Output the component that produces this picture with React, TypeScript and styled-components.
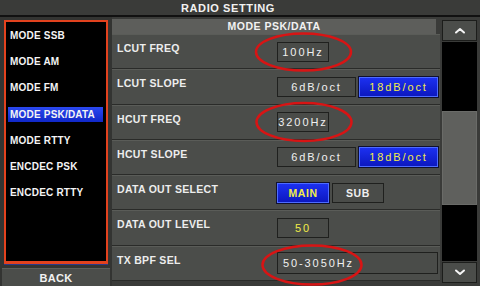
import React from "react";
import styled, { createGlobalStyle } from "styled-components";

const GlobalStyle = createGlobalStyle`
  html, body {
    margin: 0;
    padding: 0;
    background: #000;
  }
  body {
    font-family: "Liberation Sans", Arial, sans-serif;
  }
`;

const Screen = styled.div`
  position: relative;
  width: 480px;
  height: 286px;
  overflow: hidden;
  background: #2f302e;
  display: flex;
  flex-direction: column;
`;

const TitleBar = styled.div`
  height: 15px;
  flex: none;
  padding-right: 24px;
  background: #3a3b39;
  border-bottom: 2px solid #111;
  color: #f2f2f2;
  font-size: 11px;
  font-weight: bold;
  letter-spacing: 0.6px;
  line-height: 16px;
  text-align: center;
`;

const Body = styled.div`
  flex: 1;
  display: flex;
  flex-direction: row;
  min-height: 0;
`;

const LeftCol = styled.div`
  width: 112px;
  flex: none;
  display: flex;
  flex-direction: column;
  background: #333432;
`;

const ModeList = styled.div`
  margin: 3px 4px 0 4px;
  height: 239px;
  background: #000;
  border: 2px solid #e2421e;
  border-bottom-width: 3px;
  box-shadow: 0 1px 0 #2a3a8a;
  display: flex;
  flex-direction: column;
`;

const ModeItem = styled.div<{ $active?: boolean }>`
  height: 26.3px;
  display: flex;
  align-items: center;
  padding: 0 3px 0 2px;
  & > span {
    flex: 1;
    height: 15px;
    line-height: 15px;
    padding-left: 2px;
    color: #f4f4f4;
    font-size: 10px;
    font-weight: bold;
    letter-spacing: 0.2px;
    white-space: nowrap;
    background: ${(p) =>
      p.$active ? "linear-gradient(#2a48f0, #1028c8)" : "transparent"};
  }
`;

const BackButton = styled.div`
  margin: 4px 2px 0 2px;
  flex: 1;
  background: #4b4d4a;
  border-top: 1px solid #5d5f5b;
  color: #f2f2f2;
  font-size: 11px;
  font-weight: bold;
  display: flex;
  align-items: center;
  justify-content: center;
  letter-spacing: 0.3px;
`;

const MiddleCol = styled.div`
  width: 328px;
  flex: none;
  display: flex;
  flex-direction: column;
  padding-top: 2px;
  background: #3a3b39;
`;

const Header = styled.div`
  height: 15px;
  margin-right: 4px;
  background: #5d5e5b;
  color: #f2f2f2;
  font-size: 10.5px;
  font-weight: bold;
  letter-spacing: 0.5px;
  line-height: 15px;
  text-align: center;
`;

const Rows = styled.div`
  height: 247px;
  display: flex;
  flex-direction: column;
`;

const Row = styled.div`
  flex: 1;
  display: grid;
  grid-template-columns: 165px 1fr;
  background: #4b4d4a;
  border-top: 1px solid #5a5c58;
  border-bottom: 1px solid #2a2b29;
  box-sizing: border-box;
`;

const Label = styled.div`
  align-self: start;
  padding: 7px 0 0 5px;
  color: #ededed;
  font-size: 10.5px;
  font-weight: bold;
  letter-spacing: 0.3px;
  white-space: nowrap;
`;

const Controls = styled.div`
  align-self: center;
  display: flex;
  gap: 3px;
`;

const ValueButton = styled.div<{
  $w: number;
  $h?: number;
  $on?: boolean;
  $yellow?: boolean;
  $bold?: boolean;
  $left?: boolean;
}>`
  width: ${(p) => p.$w}px;
  height: ${(p) => p.$h ?? 20}px;
  box-sizing: border-box;
  display: flex;
  align-items: center;
  justify-content: ${(p) => (p.$left ? "flex-start" : "center")};
  padding-left: ${(p) => (p.$left ? "5px" : "0")};
  border: 1px solid ${(p) => (p.$on ? "#4d6cff" : "#1f201e")};
  outline: 1px solid ${(p) => (p.$on ? "#101030" : "transparent")};
  background: ${(p) =>
    p.$on ? "linear-gradient(#1c30f0, #0c18c0)" : "#4a4c49"};
  color: ${(p) => (p.$yellow || p.$on ? "#f2ec48" : "#f0f0f0")};
  font-size: ${(p) => (p.$bold ? "10.5px" : "11px")};
  font-weight: ${(p) => (p.$bold ? "bold" : "normal")};
  letter-spacing: ${(p) => (p.$bold ? "0.6px" : "1.9px")};
  white-space: nowrap;
`;

const ScrollCol = styled.div`
  flex: 1;
  display: flex;
  flex-direction: column;
  padding: 3px 3px 3px 2px;
  background: #3a3b39;
`;

const ScrollButton = styled.div`
  height: 21px;
  flex: none;
  box-sizing: border-box;
  border: 1px solid #1c1d1b;
  background: #4b4d4a;
  display: flex;
  align-items: center;
  justify-content: center;
`;

const Track = styled.div`
  flex: 1;
  margin: 1px 0;
  background: #000;
  display: flex;
  flex-direction: column;
`;

const Thumb = styled.div`
  margin-top: 69px;
  height: 94px;
  background: #5f605d;
  border: 1px solid #6a6b68;
  box-sizing: border-box;
`;

const Annotations = styled.svg`
  position: absolute;
  left: 0;
  top: 0;
  pointer-events: none;
`;

const Chevron = ({ up }: { up?: boolean }) => (
  <svg width="12" height="7" viewBox="0 0 12 7">
    <path
      d={up ? "M2 5.5 L6 2 L10 5.5" : "M2 1.5 L6 5 L10 1.5"}
      fill="none"
      stroke="#f4f4f4"
      strokeWidth="2"
      strokeLinecap="round"
      strokeLinejoin="round"
    />
  </svg>
);

const modes = [
  "MODE SSB",
  "MODE AM",
  "MODE FM",
  "MODE PSK/DATA",
  "MODE RTTY",
  "ENCDEC PSK",
  "ENCDEC RTTY",
];

export default function App() {
  return (
    <Screen>
      <GlobalStyle />
      <TitleBar>RADIO SETTING</TitleBar>
      <Body>
        <LeftCol>
          <ModeList>
            {modes.map((m) => (
              <ModeItem key={m} $active={m === "MODE PSK/DATA"}>
                <span>{m}</span>
              </ModeItem>
            ))}
          </ModeList>
          <BackButton>BACK</BackButton>
        </LeftCol>
        <MiddleCol>
          <Header>MODE PSK/DATA</Header>
          <Rows>
            <Row>
              <Label>LCUT FREQ</Label>
              <Controls>
                <ValueButton $w={52}>100Hz</ValueButton>
              </Controls>
            </Row>
            <Row>
              <Label>LCUT SLOPE</Label>
              <Controls>
                <ValueButton $w={79}>6dB/oct</ValueButton>
                <ValueButton $w={79} $on>
                  18dB/oct
                </ValueButton>
              </Controls>
            </Row>
            <Row>
              <Label>HCUT FREQ</Label>
              <Controls>
                <ValueButton $w={52}>3200Hz</ValueButton>
              </Controls>
            </Row>
            <Row>
              <Label>HCUT SLOPE</Label>
              <Controls>
                <ValueButton $w={79}>6dB/oct</ValueButton>
                <ValueButton $w={79} $on>
                  18dB/oct
                </ValueButton>
              </Controls>
            </Row>
            <Row>
              <Label>DATA OUT SELECT</Label>
              <Controls>
                <ValueButton $w={52} $on $bold>
                  MAIN
                </ValueButton>
                <ValueButton $w={52} $bold>
                  SUB
                </ValueButton>
              </Controls>
            </Row>
            <Row>
              <Label>DATA OUT LEVEL</Label>
              <Controls>
                <ValueButton $w={52} $yellow>
                  50
                </ValueButton>
              </Controls>
            </Row>
            <Row>
              <Label>TX BPF SEL</Label>
              <Controls>
                <ValueButton $w={161} $h={22} $left>
                  50-3050Hz
                </ValueButton>
              </Controls>
            </Row>
          </Rows>
        </MiddleCol>
        <ScrollCol>
          <ScrollButton>
            <Chevron up />
          </ScrollButton>
          <Track>
            <Thumb />
          </Track>
          <ScrollButton>
            <Chevron />
          </ScrollButton>
        </ScrollCol>
      </Body>
      <Annotations width="480" height="286" viewBox="0 0 480 286">
        <g fill="none" stroke="#d81414" strokeWidth="2.5">
          <ellipse cx="303.5" cy="52" rx="47.5" ry="18.5" />
          <ellipse cx="304" cy="122" rx="47.5" ry="19" />
          <ellipse cx="312" cy="265" rx="49.5" ry="19.5" />
        </g>
      </Annotations>
    </Screen>
  );
}
